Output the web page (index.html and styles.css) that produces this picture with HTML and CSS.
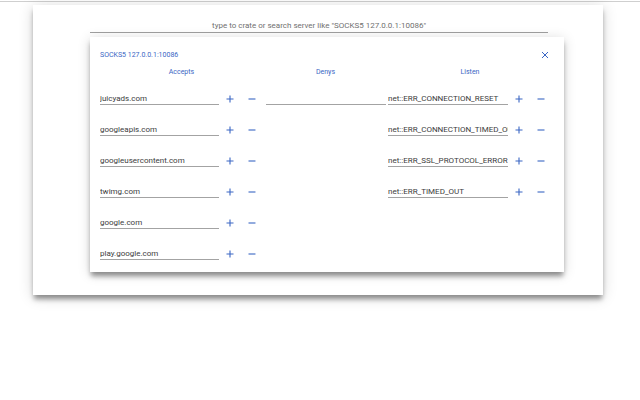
FILE: index.html
```html
<!DOCTYPE html>
<html>
<head>
<meta charset="utf-8">
<link rel="stylesheet" href="styles.css">
</head>
<body>
<div class="topline"></div>
<div class="page">
<div class="card">
  <input class="search" type="text" placeholder="type to crate or search server like &quot;SOCKS5 127.0.0.1:10086&quot;">
  <div class="dialog">
    <div class="header">
      <span class="title">SOCKS5 127.0.0.1:10086</span>
      <svg class="close" width="8" height="8" viewBox="0 0 8 8"><path d="M1 1L7 7M7 1L1 7" stroke="#3a66c4" stroke-width="1" fill="none"/></svg>
    </div>
    <div class="cols">
      <div class="col col-wide">
        <div class="heading">Accepts</div>
        <div class="row"><input class="field" value="juicyads.com"><span class="btn"><svg width="8" height="8" viewBox="0 0 8 8"><path d="M4 0.5V7.5M0.5 4H7.5" stroke="#3a66c4" stroke-width="1.1"/></svg></span><span class="btn"><svg width="8" height="8" viewBox="0 0 8 8"><path d="M0.5 4H7.5" stroke="#3a66c4" stroke-width="1.1"/></svg></span></div>
        <div class="row"><input class="field" value="googleapis.com"><span class="btn"><svg width="8" height="8" viewBox="0 0 8 8"><path d="M4 0.5V7.5M0.5 4H7.5" stroke="#3a66c4" stroke-width="1.1"/></svg></span><span class="btn"><svg width="8" height="8" viewBox="0 0 8 8"><path d="M0.5 4H7.5" stroke="#3a66c4" stroke-width="1.1"/></svg></span></div>
        <div class="row"><input class="field" value="googleusercontent.com"><span class="btn"><svg width="8" height="8" viewBox="0 0 8 8"><path d="M4 0.5V7.5M0.5 4H7.5" stroke="#3a66c4" stroke-width="1.1"/></svg></span><span class="btn"><svg width="8" height="8" viewBox="0 0 8 8"><path d="M0.5 4H7.5" stroke="#3a66c4" stroke-width="1.1"/></svg></span></div>
        <div class="row"><input class="field" value="twimg.com"><span class="btn"><svg width="8" height="8" viewBox="0 0 8 8"><path d="M4 0.5V7.5M0.5 4H7.5" stroke="#3a66c4" stroke-width="1.1"/></svg></span><span class="btn"><svg width="8" height="8" viewBox="0 0 8 8"><path d="M0.5 4H7.5" stroke="#3a66c4" stroke-width="1.1"/></svg></span></div>
        <div class="row"><input class="field" value="google.com"><span class="btn"><svg width="8" height="8" viewBox="0 0 8 8"><path d="M4 0.5V7.5M0.5 4H7.5" stroke="#3a66c4" stroke-width="1.1"/></svg></span><span class="btn"><svg width="8" height="8" viewBox="0 0 8 8"><path d="M0.5 4H7.5" stroke="#3a66c4" stroke-width="1.1"/></svg></span></div>
        <div class="row"><input class="field" value="play.google.com"><span class="btn"><svg width="8" height="8" viewBox="0 0 8 8"><path d="M4 0.5V7.5M0.5 4H7.5" stroke="#3a66c4" stroke-width="1.1"/></svg></span><span class="btn"><svg width="8" height="8" viewBox="0 0 8 8"><path d="M0.5 4H7.5" stroke="#3a66c4" stroke-width="1.1"/></svg></span></div>
      </div>
      <div class="col col-narrow">
        <div class="heading">Denys</div>
        <div class="row"><input class="field field-deny" value=""></div>
      </div>
      <div class="col col-wide">
        <div class="heading">Listen</div>
        <div class="row"><input class="field field-listen" value="net::ERR_CONNECTION_RESET"><span class="btn"><svg width="8" height="8" viewBox="0 0 8 8"><path d="M4 0.5V7.5M0.5 4H7.5" stroke="#3a66c4" stroke-width="1.1"/></svg></span><span class="btn"><svg width="8" height="8" viewBox="0 0 8 8"><path d="M0.5 4H7.5" stroke="#3a66c4" stroke-width="1.1"/></svg></span></div>
        <div class="row"><input class="field field-listen" value="net::ERR_CONNECTION_TIMED_OUT"><span class="btn"><svg width="8" height="8" viewBox="0 0 8 8"><path d="M4 0.5V7.5M0.5 4H7.5" stroke="#3a66c4" stroke-width="1.1"/></svg></span><span class="btn"><svg width="8" height="8" viewBox="0 0 8 8"><path d="M0.5 4H7.5" stroke="#3a66c4" stroke-width="1.1"/></svg></span></div>
        <div class="row"><input class="field field-listen" value="net::ERR_SSL_PROTOCOL_ERROR"><span class="btn"><svg width="8" height="8" viewBox="0 0 8 8"><path d="M4 0.5V7.5M0.5 4H7.5" stroke="#3a66c4" stroke-width="1.1"/></svg></span><span class="btn"><svg width="8" height="8" viewBox="0 0 8 8"><path d="M0.5 4H7.5" stroke="#3a66c4" stroke-width="1.1"/></svg></span></div>
        <div class="row"><input class="field field-listen" value="net::ERR_TIMED_OUT"><span class="btn"><svg width="8" height="8" viewBox="0 0 8 8"><path d="M4 0.5V7.5M0.5 4H7.5" stroke="#3a66c4" stroke-width="1.1"/></svg></span><span class="btn"><svg width="8" height="8" viewBox="0 0 8 8"><path d="M0.5 4H7.5" stroke="#3a66c4" stroke-width="1.1"/></svg></span></div>
      </div>
    </div>
  </div>
</div>
</div>
</body>
</html>
```

FILE: styles.css
```css
html, body {
  margin: 0;
  padding: 0;
  background: #fff;
  font-family: Roboto, "Liberation Sans", sans-serif;
}

.topline {
  height: 1px;
  margin-top: 1px;
  background: #cfcfcf;
}

.page {
  padding: 3px 37px 40px 33px;
}

.card {
  height: 290px;
  box-sizing: border-box;
  padding-top: 13px;
  background: #fff;
  box-shadow: 0 5px 5px -1px rgba(0,0,0,0.4), 0 2px 14px rgba(0,0,0,0.16);
  display: flex;
  flex-direction: column;
}

.search {
  margin-left: 57px;
  width: 458px;
  height: 15px;
  box-sizing: border-box;
  padding: 0;
  border: none;
  border-bottom: 1px solid #a0a0a0;
  font-family: Roboto, "Liberation Sans", sans-serif;
  font-size: 8px;
  text-align: center;
  outline: none;
  background: transparent;
}

.search::placeholder {
  color: #707070;
}

.dialog {
  margin-top: 4px;
  margin-left: 57px;
  width: 474px;
  height: 235px;
  box-sizing: border-box;
  padding: 0 11px 0 10px;
  background: #fff;
  box-shadow: 0 5px 5px -1px rgba(0,0,0,0.4), 0 2px 12px rgba(0,0,0,0.16);
}

.header {
  display: flex;
  justify-content: space-between;
  align-items: center;
  padding-top: 13px;
  height: 10px;
}

.title {
  font-size: 7px;
  line-height: 10px;
  color: #3a66c4;
}

.close {
  display: block;
  margin-right: 4px;
}

.cols {
  display: grid;
  grid-template-columns: 163px 120px 164px;
  column-gap: 2.5px;
  margin-top: 7px;
}

.heading {
  font-size: 7px;
  line-height: 10px;
  color: #3a66c4;
  text-align: center;
  margin-bottom: 6px;
}

.row {
  height: 31px;
  display: flex;
  align-items: center;
}

.field {
  width: 119px;
  height: 13px;
  box-sizing: border-box;
  padding: 0;
  border: none;
  border-bottom: 1px solid #a3a3a3;
  font-family: Roboto, "Liberation Sans", sans-serif;
  font-size: 8px;
  color: #3c3c3c;
  background: transparent;
  outline: none;
  flex: none;
}

.field-deny {
  width: 120px;
}

.field-listen {
  width: 120px;
}

.btn {
  width: 22px;
  height: 13px;
  display: flex;
  align-items: center;
  justify-content: center;
  flex: none;
}

.btn svg {
  display: block;
}
```
